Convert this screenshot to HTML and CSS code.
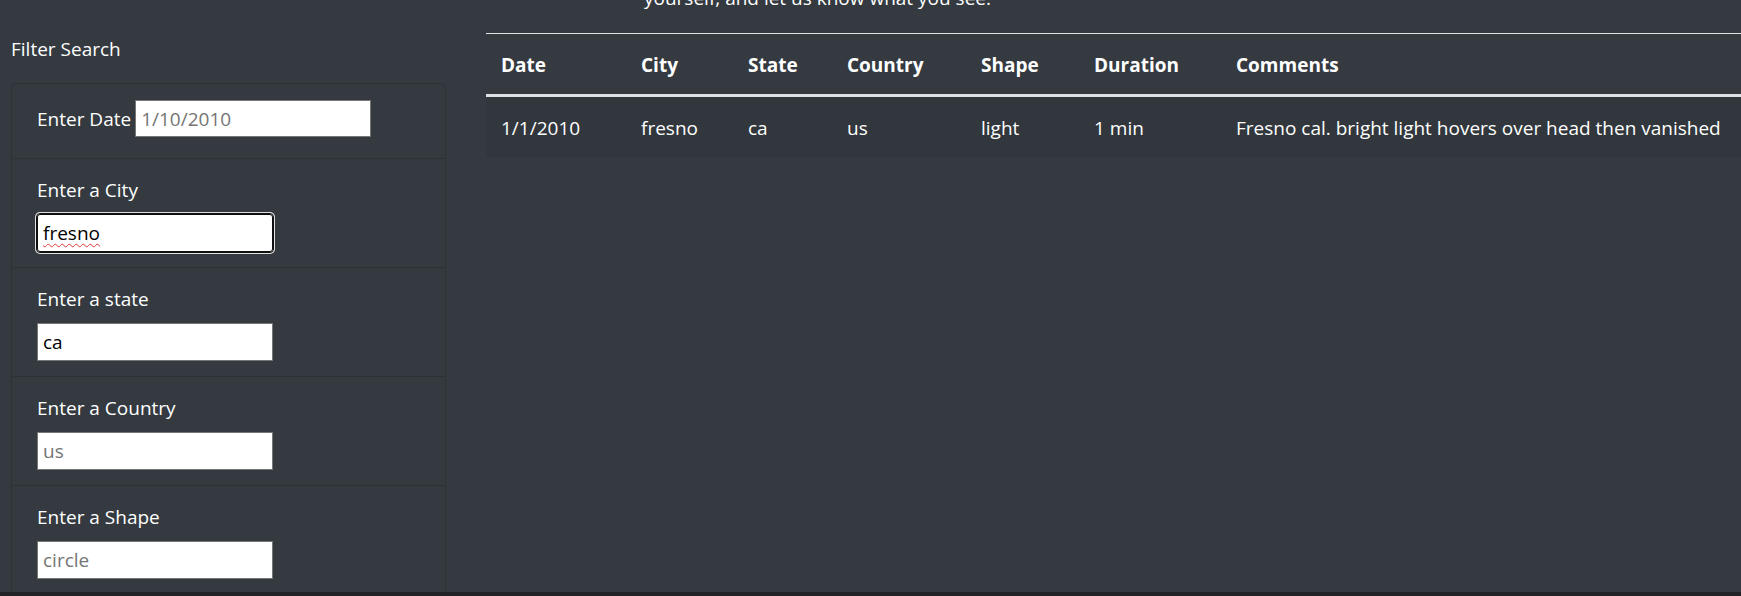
FILE: index.html
```html
<!DOCTYPE html>
<html lang="en">
<head>
<meta charset="utf-8">
<title>UFO Sightings</title>
<link rel="stylesheet" href="styles.css">
</head>
<body>
<div class="page">
  <div class="layout">
    <aside class="sidebar">
      <div class="filter-title">Filter Search</div>
      <ul class="filters">
        <li class="filter filter-inline">
          <label for="datetime">Enter Date</label>
          <input id="datetime" class="field-input" type="text" placeholder="1/10/2010">
        </li>
        <li class="filter">
          <label for="city">Enter a City</label>
          <div class="field">
            <input id="city" class="field-input is-focused" type="text" value="fresno">
            <span class="squiggle">fresno</span>
          </div>
        </li>
        <li class="filter">
          <label for="state">Enter a state</label>
          <input id="state" class="field-input" type="text" value="ca">
        </li>
        <li class="filter">
          <label for="country">Enter a Country</label>
          <input id="country" class="field-input" type="text" placeholder="us">
        </li>
        <li class="filter">
          <label for="shape">Enter a Shape</label>
          <input id="shape" class="field-input" type="text" placeholder="circle">
        </li>
      </ul>
    </aside>
    <main class="content">
      <p class="intro">yourself, and let us know what you see.</p>
      <table class="sightings">
        <colgroup>
          <col class="c-date"><col class="c-city"><col class="c-state"><col class="c-country"><col class="c-shape"><col class="c-duration"><col class="c-comments">
        </colgroup>
        <thead>
          <tr>
            <th>Date</th><th>City</th><th>State</th><th>Country</th><th>Shape</th><th>Duration</th><th>Comments</th>
          </tr>
        </thead>
        <tbody>
          <tr>
            <td>1/1/2010</td><td>fresno</td><td>ca</td><td>us</td><td>light</td><td>1 min</td><td>Fresno cal. bright light hovers over head then vanished</td>
          </tr>
        </tbody>
      </table>
    </main>
  </div>
</div>
<div class="bottom-strip"></div>
</body>
</html>
```
FILE: styles.css
```css
* { box-sizing: border-box; }

html, body {
  margin: 0;
  padding: 0;
}

body {
  background: #343a40;
  color: #ffffff;
  font-family: "Open Sans", "Noto Sans", sans-serif;
  font-size: 19px;
  line-height: 30px;
  overflow: hidden;
}

.page {
  height: 592px;
  overflow: hidden;
}

.layout {
  display: flex;
  gap: 40px;
  padding-left: 11px;
}

/* ---------- sidebar ---------- */
.sidebar {
  width: 435px;
  flex: none;
  padding-top: 34px;
}

.filter-title {
  line-height: 30px;
  margin-bottom: 19px;
}

.filters {
  list-style: none;
  margin: 0;
  padding: 0;
  border: 1px solid rgba(0, 0, 0, 0.13);
  border-radius: 5px;
}

.filter {
  padding: 15px 25px;
  border-top: 1px solid rgba(0, 0, 0, 0.13);
}

.filter:first-child {
  border-top: none;
}

.filter label {
  display: block;
  line-height: 30px;
  padding-top: 1px;
  margin-bottom: 9px;
}

.filter-inline {
  display: flex;
  align-items: center;
  gap: 4px;
  padding-bottom: 21px;
}

.filter-inline label {
  padding-top: 1px;
  margin-bottom: 0;
}

.filter-inline .field-input {
  width: 236px;
  height: 37px;
  margin-top: 1px;
}

.field {
  position: relative;
  width: 236px;
}

.field-input {
  display: block;
  width: 236px;
  height: 38px;
  margin: 0;
  padding: 0 5px;
  border: 1px solid #767676;
  border-radius: 0;
  background: #ffffff;
  color: #000000;
  font-family: "Open Sans", "Noto Sans", sans-serif;
  font-size: 19px;
  line-height: 36px;
}

.field-input::placeholder {
  color: #757575;
  opacity: 1;
}

.field-input.is-focused {
  border-color: #101010;
  border-radius: 3px;
  outline: 1px solid #101010;
  outline-offset: 0;
  box-shadow: 0 0 0 2px rgba(255, 255, 255, 0.85);
}

.squiggle {
  position: absolute;
  left: 6px;
  top: 0;
  line-height: 38px;
  font-size: 19px;
  color: transparent;
  text-decoration: underline wavy #e0383e;
  text-decoration-thickness: 1px;
  text-underline-offset: 3px;
  text-decoration-skip-ink: none;
  pointer-events: none;
  white-space: nowrap;
}

/* ---------- main ---------- */
.content {
  flex: 1;
  min-width: 0;
}

.intro {
  margin: -17px 0 20px;
  padding-left: 158px;
  line-height: 30px;
  white-space: nowrap;
}

.sightings {
  width: 1255px;
  table-layout: fixed;
  border-collapse: collapse;
  color: #ffffff;
}

.c-date { width: 140px; }
.c-city { width: 107px; }
.c-state { width: 99px; }
.c-country { width: 134px; }
.c-shape { width: 113px; }
.c-duration { width: 142px; }
.c-comments { width: auto; }

.sightings th,
.sightings td {
  padding: 16px 15px 14px;
  text-align: left;
  line-height: 30px;
  white-space: nowrap;
}

.sightings th {
  font-weight: 700;
  vertical-align: bottom;
  border-top: 1px solid #dee2e6;
  border-bottom: 3px solid #dee2e6;
}

.sightings tbody tr {
  background: rgba(0, 0, 0, 0.05);
}

.bottom-strip {
  height: 4px;
  background: #222326;
}
```
